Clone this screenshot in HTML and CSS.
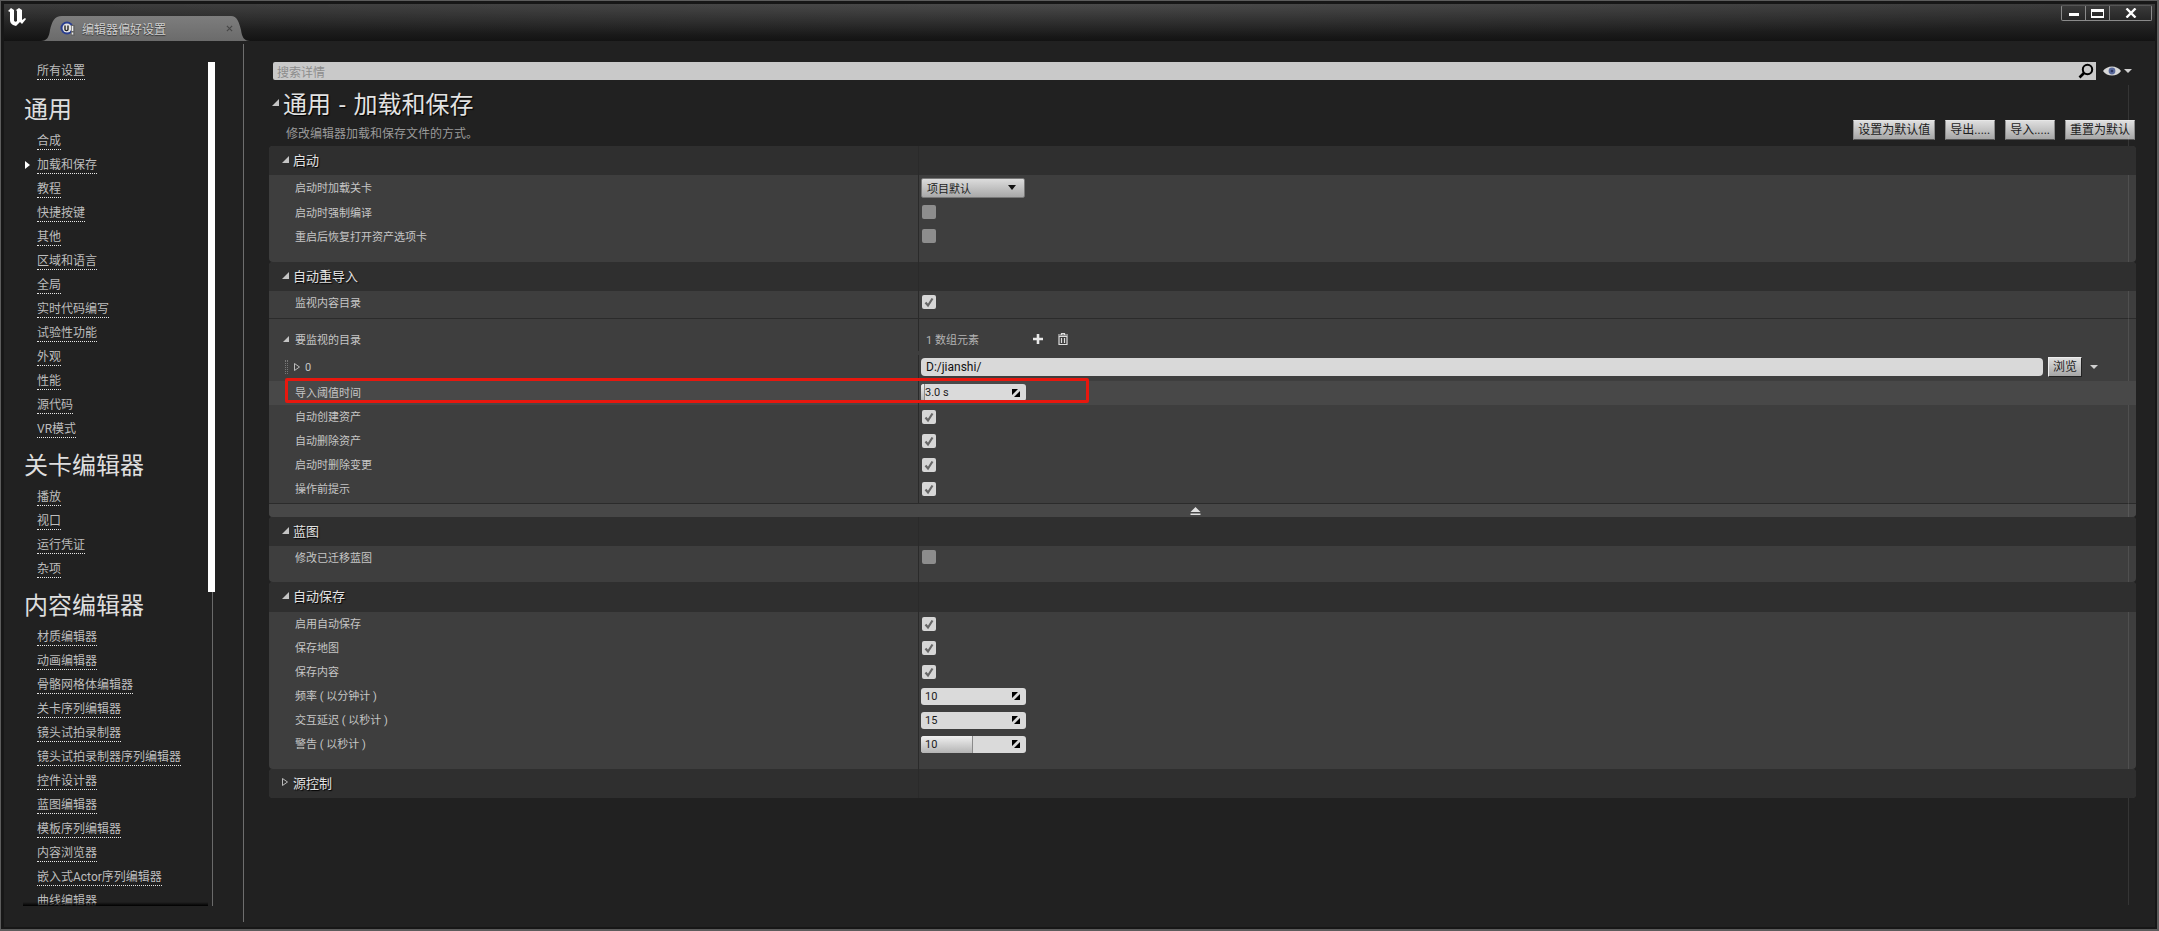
FILE: index.html
```html
<!DOCTYPE html>
<html lang="zh-CN">
<head>
	<meta charset="utf-8">
	<title>编辑器偏好设置</title>
	<link rel="stylesheet" href="styles.css">
</head>
<body>
<div class="window">
	<header class="titlebar">
		<svg class="logo" viewBox="0 0 20 20"><path d="M1 4 L4 1 L7 3 L7 13 C7 15 9 15 10 14 L10 4 L9 3 L12 1 L15 3 L15 13 L18 11 L19 12 L15 17 L13 15 L9 19 L6 18 C4 17 3 15 3 13 L3 5 Z" fill="#fff"/></svg>
		<div class="tab">
			<svg class="tab-icon" viewBox="0 0 16 16">
				<circle cx="7" cy="7" r="6.5" fill="#2b3f8f"/>
				<circle cx="7" cy="7" r="4.5" fill="#e4e4e4"/>
				<path d="M5 4.5 V8.5 C5 10 8 10 8 8.5 V4.5" fill="none" stroke="#222" stroke-width="1.4"/>
				<path d="M11 4 H15 V15 H11 Z" fill="#666"/>
				<path d="M12.5 5 V14" stroke="#eee" stroke-width="1.5" stroke-dasharray="5 1.5 2"/>
			</svg>
			<span class="tab-title">编辑器偏好设置</span>
			<svg class="tab-close" viewBox="0 0 8 8"><path d="M1 1 L7 7 M7 1 L1 7" stroke="#474747" stroke-width="1.3"/></svg>
		</div>
		<div class="win-btns">
			<div class="win-btn"><span class="ic-min"></span></div>
			<div class="win-btn"><span class="ic-max"></span></div>
			<div class="win-btn win-close"><svg viewBox="0 0 12 10"><path d="M1.5 .5 L10.5 9.5 M10.5 .5 L1.5 9.5" stroke="#fff" stroke-width="2.4"/></svg></div>
		</div>
	</header>

	<div class="content">
		<aside class="sidebar">
			<nav class="side-list">
				<div class="side-item"><a>所有设置</a></div>
				<div class="side-head first">通用</div>
				<div class="side-item"><a>合成</a></div>
				<div class="side-item active"><a>加载和保存</a></div>
				<div class="side-item"><a>教程</a></div>
				<div class="side-item"><a>快捷按键</a></div>
				<div class="side-item"><a>其他</a></div>
				<div class="side-item"><a>区域和语言</a></div>
				<div class="side-item"><a>全局</a></div>
				<div class="side-item"><a>实时代码编写</a></div>
				<div class="side-item"><a>试验性功能</a></div>
				<div class="side-item"><a>外观</a></div>
				<div class="side-item"><a>性能</a></div>
				<div class="side-item"><a>源代码</a></div>
				<div class="side-item"><a>VR模式</a></div>
				<div class="side-head">关卡编辑器</div>
				<div class="side-item"><a>播放</a></div>
				<div class="side-item"><a>视口</a></div>
				<div class="side-item"><a>运行凭证</a></div>
				<div class="side-item"><a>杂项</a></div>
				<div class="side-head">内容编辑器</div>
				<div class="side-item"><a>材质编辑器</a></div>
				<div class="side-item"><a>动画编辑器</a></div>
				<div class="side-item"><a>骨骼网格体编辑器</a></div>
				<div class="side-item"><a>关卡序列编辑器</a></div>
				<div class="side-item"><a>镜头试拍录制器</a></div>
				<div class="side-item"><a>镜头试拍录制器序列编辑器</a></div>
				<div class="side-item"><a>控件设计器</a></div>
				<div class="side-item"><a>蓝图编辑器</a></div>
				<div class="side-item"><a>模板序列编辑器</a></div>
				<div class="side-item"><a>内容浏览器</a></div>
				<div class="side-item"><a>嵌入式Actor序列编辑器</a></div>
				<div class="side-item"><a>曲线编辑器</a></div>
			</nav>
			<div class="side-scroll">
				<div class="thumb"></div>
				<div class="track"></div>
			</div>
		</aside>
		<div class="splitter"></div>

		<main class="main">
			<div class="scroll-line"></div>
			<div class="search-row">
				<div class="search">
					<span>搜索详情</span>
					<svg class="search-ic" viewBox="0 0 16 16"><circle cx="9.5" cy="6.5" r="4.7" fill="none" stroke="#000" stroke-width="2"/><path d="M6 10 L1.5 14.5" stroke="#000" stroke-width="2.6"/></svg>
				</div>
				<svg class="eye" viewBox="0 0 18 10"><path d="M0 5 C4 -1 14 -1 18 5 C14 11 4 11 0 5 Z" fill="#d8d8d8"/><circle cx="9" cy="5" r="3.4" fill="#5a6a9c"/><circle cx="9" cy="5" r="1.3" fill="#2c3560"/></svg>
				<span class="caret"></span>
			</div>

			<div class="page-head">
				<div class="page-title">
					<div class="title-line"><span class="tri"></span><h1>通用 - 加载和保存</h1></div>
					<p>修改编辑器加载和保存文件的方式。</p>
				</div>
				<div class="actions">
					<button class="btn">设置为默认值</button>
					<button class="btn">导出.....</button>
					<button class="btn">导入.....</button>
					<button class="btn">重置为默认</button>
				</div>
			</div>

			<div class="panel">
				<section class="sec">
					<div class="row sec-head"><div class="lbl"><span class="tri"></span>启动</div><div class="val"></div></div>
					<div class="row h25"><div class="lbl">启动时加载关卡</div><div class="val"><div class="combo">项目默认<span class="combo-arrow"></span></div></div></div>
					<div class="row"><div class="lbl">启动时强制编译</div><div class="val"><span class="check off"></span></div></div>
					<div class="row"><div class="lbl">重启后恢复打开资产选项卡</div><div class="val"><span class="check off"></span></div></div>
					<div class="row gap g14"><div class="lbl"></div><div class="val"></div></div>
				</section>

				<section class="sec">
					<div class="row sec-head"><div class="lbl"><span class="tri"></span>自动重导入</div><div class="val"></div></div>
					<div class="row h22"><div class="lbl">监视内容目录</div><div class="val"><span class="check"><svg viewBox="0 0 14 14"><path d="M3.5 7.5 L6 10.5 L10.5 3.5" fill="none" stroke="#666" stroke-width="2.2"/></svg></span></div></div>
					<div class="row gap g5"><div class="lbl"></div><div class="val"></div></div>
					<div class="hr"></div>
					<div class="row gap g8"><div class="lbl"></div><div class="val"></div></div>
					<div class="row">
						<div class="lbl sub"><span class="tri small"></span>要监视的目录</div>
						<div class="val array-val">
							<span class="count">1 数组元素</span>
							<svg class="ic-add" viewBox="0 0 10 10"><path d="M5 0 V10 M0 5 H10" stroke="#e8e8e8" stroke-width="2.6"/></svg>
							<svg class="ic-trash" viewBox="0 0 10 12"><path d="M3.5 1.5 V.5 H6.5 V1.5 M0 2 H10 M1 3.5 H9 V11.5 H1 Z" fill="none" stroke="#ddd" stroke-width="1.2"/><path d="M3.5 5 V10 M6.5 5 V10" stroke="#ddd" stroke-width="1.2"/></svg>
						</div>
					</div>
					<div class="row item">
						<div class="lbl sub">
							<span class="grip"></span>
							<svg class="tri-closed" viewBox="0 0 6 8"><path d="M.5 .5 L5.5 4 L.5 7.5 Z" fill="none" stroke="#bbb"/></svg>
							<span>0</span>
						</div>
						<div class="val path-val">
							<div class="input">D:/jianshi/</div>
							<button class="btn browse">浏览</button>
							<span class="caret"></span>
						</div>
					</div>
					<div class="row hi">
						<div class="lbl">导入阈值时间</div>
						<div class="val"><div class="spin"><span class="fill tiny"></span><span class="num">3.0 s</span><svg class="spin-ic" viewBox="0 0 8 8"><path d="M0 0 H6 L0 6 Z M8 8 H2 L8 2 Z" fill="#000"/></svg></div></div>
						<div class="callout"></div>
					</div>
					<div class="row"><div class="lbl">自动创建资产</div><div class="val"><span class="check"><svg viewBox="0 0 14 14"><path d="M3.5 7.5 L6 10.5 L10.5 3.5" fill="none" stroke="#666" stroke-width="2.2"/></svg></span></div></div>
					<div class="row"><div class="lbl">自动删除资产</div><div class="val"><span class="check"><svg viewBox="0 0 14 14"><path d="M3.5 7.5 L6 10.5 L10.5 3.5" fill="none" stroke="#666" stroke-width="2.2"/></svg></span></div></div>
					<div class="row"><div class="lbl">启动时删除变更</div><div class="val"><span class="check"><svg viewBox="0 0 14 14"><path d="M3.5 7.5 L6 10.5 L10.5 3.5" fill="none" stroke="#666" stroke-width="2.2"/></svg></span></div></div>
					<div class="row"><div class="lbl">操作前提示</div><div class="val"><span class="check"><svg viewBox="0 0 14 14"><path d="M3.5 7.5 L6 10.5 L10.5 3.5" fill="none" stroke="#666" stroke-width="2.2"/></svg></span></div></div>
					<div class="row gap g2"><div class="lbl"></div><div class="val"></div></div>
					<div class="hr"></div>
					<div class="adv"><svg viewBox="0 0 11 8"><path d="M5.5 0 L10.5 5 H.5 Z M.5 6.5 H10.5 V8 H.5 Z" fill="#e0e0e0"/></svg></div>
				</section>

				<section class="sec">
					<div class="row sec-head"><div class="lbl"><span class="tri"></span>蓝图</div><div class="val"></div></div>
					<div class="row h22"><div class="lbl">修改已迁移蓝图</div><div class="val"><span class="check off"></span></div></div>
					<div class="row gap g14"><div class="lbl"></div><div class="val"></div></div>
				</section>

				<section class="sec saves">
					<div class="row sec-head tall"><div class="lbl"><span class="tri"></span>自动保存</div><div class="val"></div></div>
					<div class="row"><div class="lbl">启用自动保存</div><div class="val"><span class="check"><svg viewBox="0 0 14 14"><path d="M3.5 7.5 L6 10.5 L10.5 3.5" fill="none" stroke="#666" stroke-width="2.2"/></svg></span></div></div>
					<div class="row"><div class="lbl">保存地图</div><div class="val"><span class="check"><svg viewBox="0 0 14 14"><path d="M3.5 7.5 L6 10.5 L10.5 3.5" fill="none" stroke="#666" stroke-width="2.2"/></svg></span></div></div>
					<div class="row"><div class="lbl">保存内容</div><div class="val"><span class="check"><svg viewBox="0 0 14 14"><path d="M3.5 7.5 L6 10.5 L10.5 3.5" fill="none" stroke="#666" stroke-width="2.2"/></svg></span></div></div>
					<div class="row"><div class="lbl">频率 ( 以分钟计 )</div><div class="val"><div class="spin"><span class="num">10</span><svg class="spin-ic" viewBox="0 0 8 8"><path d="M0 0 H6 L0 6 Z M8 8 H2 L8 2 Z" fill="#000"/></svg></div></div></div>
					<div class="row"><div class="lbl">交互延迟 ( 以秒计 )</div><div class="val"><div class="spin"><span class="num">15</span><svg class="spin-ic" viewBox="0 0 8 8"><path d="M0 0 H6 L0 6 Z M8 8 H2 L8 2 Z" fill="#000"/></svg></div></div></div>
					<div class="row"><div class="lbl">警告 ( 以秒计 )</div><div class="val"><div class="spin"><span class="fill half"></span><span class="num">10</span><svg class="spin-ic" viewBox="0 0 8 8"><path d="M0 0 H6 L0 6 Z M8 8 H2 L8 2 Z" fill="#000"/></svg></div></div></div>
					<div class="row gap g13"><div class="lbl"></div><div class="val"></div></div>
				</section>

				<section class="sec">
					<div class="row sec-head"><div class="lbl"><svg class="tri-closed head" viewBox="0 0 6 8"><path d="M.5 .5 L5.5 4 L.5 7.5 Z" fill="none" stroke="#bbb"/></svg>源控制</div><div class="val"></div></div>
				</section>
			</div>
		</main>
	</div>
</div>
</body>
</html>
```

FILE: styles.css
```css
* {
	box-sizing: border-box;
	margin: 0;
	padding: 0;
}

html, body {
	height: 100%;
	overflow: hidden;
}

body {
	font-family: Roboto, 'Noto Sans CJK SC', sans-serif;
	background: #1a1a1a;
	color: #c8c8c8;
}

.window {
	height: 931px;
	border: solid #5c5c5c;
	border-width: 1px 2px 2px 1px;
	padding: 3px 2px 2px 3px;
	background: #171717;
	display: flex;
	flex-direction: column;
}

/* title bar */

.titlebar {
	height: 37px;
	flex: none;
	display: flex;
	align-items: flex-start;
	background:
		radial-gradient(ellipse 60% 90% at 50% 0, rgba(255,255,255,0.09), rgba(255,255,255,0) 100%),
		linear-gradient(180deg, #383838, #131313);
}

.logo {
	width: 20px;
	height: 20px;
	margin: 3px 0 0 3px;
	flex: none;
}

.tab {
	width: 209px;
	height: 25px;
	margin: 12px 0 0 14px;
	padding: 0 17px 0 19px;
	flex: none;
	display: flex;
	align-items: center;
	background: linear-gradient(180deg, #7d7d7d, #6b6b6b);
	clip-path: path('M0 25 C6 25 8 21 9 14 C11 6 13 0 21 0 L190 0 C196 0 198 6 200 14 C201 21 203 25 209 25 Z');
}

.tab-icon {
	width: 16px;
	height: 16px;
	flex: none;
}

.tab-title {
	margin-left: 6px;
	font-size: 12px;
	color: #cfcfcf;
	text-shadow: 0 1px 1px #333;
	flex: 1;
}

.tab-close {
	width: 7px;
	height: 7px;
}

.win-btns {
	margin: 1px 3px 0 auto;
	display: flex;
	height: 16px;
	border: 1px solid #8a8a8a;
	border-top-color: #555;
	border-radius: 2px;
	background: linear-gradient(180deg, #3a3a3a, #262626);
}

.win-btn {
	width: 24px;
	display: flex;
	align-items: center;
	justify-content: center;
	border-right: 1px solid #8a8a8a;
}

.win-close {
	width: 41px;
	border-right: 0;
}

.win-close svg {
	width: 12px;
	height: 10px;
}

.ic-min {
	width: 10px;
	height: 3px;
	margin-top: 3px;
	background: #fff;
}

.ic-max {
	width: 13px;
	height: 9px;
	border: 1px solid #fff;
	border-top-width: 3px;
	border-bottom-width: 2px;
}

/* sidebar */

.content {
	flex: 1;
	min-height: 0;
	display: flex;
	background: #212121;
}

.sidebar {
	width: 239px;
	flex: none;
	display: flex;
	padding-bottom: 21px;
}

.side-list {
	width: 204px;
	flex: none;
	padding: 18px 0 0 33px;
	overflow: hidden;
	position: relative;
}

.side-list::after {
	content: '';
	position: absolute;
	left: 19px;
	right: 0;
	bottom: 0;
	height: 4px;
	background: linear-gradient(0deg, #000, rgba(0,0,0,0));
}

.side-item {
	height: 24px;
	padding-top: 1px;
	position: relative;
	font-size: 12px;
	line-height: 23px;
	color: #bdbdbd;
}

.side-item a {
	display: inline-block;
	line-height: 15px;
	border-bottom: 1px dotted #e8e8e8;
	white-space: nowrap;
}

.side-item.active::before {
	content: '';
	position: absolute;
	left: -12px;
	top: 8px;
	border-left: 5px solid #fff;
	border-top: 4px solid transparent;
	border-bottom: 4px solid transparent;
}

.side-head {
	height: 38px;
	margin: 6px 0 0 -13px;
	font-size: 24px;
	line-height: 38px;
	color: #dedede;
}

.side-head.first {
	margin-top: 8px;
}

.side-scroll {
	width: 7px;
	margin-top: 21px;
	flex: none;
	display: flex;
	flex-direction: column;
}

.thumb {
	height: 530px;
	background: #fff;
}

.track {
	flex: 1;
	width: 1px;
	margin-left: 4px;
	background: #6a6a6a;
}

.splitter {
	width: 1px;
	margin: 3px 0 5px;
	flex: none;
	background: #6e6e6e;
}

/* main column */

.main {
	flex: 1;
	min-width: 0;
	position: relative;
	padding: 21px 19px 0 25px;
}

.scroll-line {
	position: absolute;
	left: 1884px;
	top: 44px;
	bottom: 22px;
	width: 1px;
	background: rgba(255,255,255,0.09);
}

.search-row {
	height: 18px;
	padding-left: 4px;
	display: flex;
	align-items: center;
}

.search {
	width: 1823px;
	height: 18px;
	padding: 0 2px 0 4px;
	display: flex;
	align-items: center;
	justify-content: space-between;
	background: #c9c9c9;
	border-radius: 2px 0 0 2px;
	font-size: 12px;
	color: #8c8c8c;
}

.search-ic {
	width: 16px;
	height: 16px;
}

.eye {
	width: 18px;
	height: 10px;
	margin-left: 7px;
}

.caret {
	width: 0;
	height: 0;
	margin-left: 3px;
	border-top: 4px solid #d0d0d0;
	border-left: 4px solid transparent;
	border-right: 4px solid transparent;
}

.page-head {
	height: 66px;
	display: flex;
	justify-content: space-between;
	align-items: flex-end;
	padding: 0 1px 6px 3px;
}

.page-title {
	align-self: flex-start;
	padding-top: 6px;
}

.title-line {
	display: flex;
	align-items: center;
	height: 32px;
}

.page-title h1 {
	margin-left: 4px;
	font-size: 24px;
	font-weight: 400;
	word-spacing: 2px;
	color: #e2e2e2;
	text-shadow: 1px 1px 1px #000;
}

.page-title p {
	margin: 8px 0 0 14px;
	font-size: 12px;
	line-height: 16px;
	color: #9a9a9a;
}

.tri {
	width: 0;
	height: 0;
	flex: none;
	border-bottom: 7px solid #c4c4c4;
	border-left: 7px solid transparent;
}

.tri.small {
	border-bottom-width: 6px;
	border-left-width: 6px;
	margin-right: 6px;
	margin-left: -12px;
}

.tri-closed {
	width: 6px;
	height: 8px;
	flex: none;
}

.actions {
	display: flex;
	gap: 10px;
}

.btn {
	height: 20px;
	padding: 0 4px;
	font-family: inherit;
	font-size: 12px;
	line-height: 18px;
	color: #1d1d1d;
	white-space: nowrap;
	background: linear-gradient(180deg, #dedede, #a6a6a6);
	border: 1px solid #8c8c8c;
	border-top-color: #e6e6e6;
	border-bottom-color: #555;
}

/* details panel */

.panel {
	display: flex;
	flex-direction: column;
	font-size: 11px;
}

.sec {
	background: #3e3e3e;
	border-radius: 4px;
	overflow: hidden;
}

.row {
	display: grid;
	grid-template-columns: 649px 1fr;
	height: 24px;
	position: relative;
}

.h25 { height: 25px; }
.h22 { height: 22px; }

.lbl {
	padding-left: 26px;
	display: flex;
	align-items: center;
	color: #c6c6c6;
}

/* these labels sit a pixel above their controls */
.h25 .lbl,
.row.hi .lbl,
.row.hi ~ .row .lbl,
.saves .row .lbl {
	padding-bottom: 2px;
}

.val {
	padding-left: 2px;
	display: flex;
	align-items: center;
	border-left: 1px solid #2a2a2a;
}

.sec-head {
	height: 29px;
	background: #2f2f2f;
}

.sec-head.tall {
	height: 30px;
}

.sec .sec-head .lbl {
	padding-left: 13px;
	padding-bottom: 3px;
	font-size: 13px;
	color: #e2e2e2;
	text-shadow: 1px 1px 1px #000;
}

.sec-head .tri {
	margin-right: 4px;
}

.tri-closed.head {
	margin-right: 5px;
}

.gap.g2 { height: 2px; }
.gap.g5 { height: 5px; }
.gap.g8 { height: 8px; }
.gap.g13 { height: 13px; }
.gap.g14 { height: 14px; }

.hr {
	height: 1px;
	background: #2b2b2b;
}

.row.item {
	height: 30px;
	padding-bottom: 2px;
	padding-top: 4px;
}

.row.hi {
	background: #484848;
}

.row.hi .val {
	padding-bottom: 1px;
}

.callout {
	position: absolute;
	left: 16px;
	top: -3px;
	width: 804px;
	height: 25px;
	border: 3px solid #e8170e;
	border-radius: 2px;
}

.adv {
	height: 13px;
	padding-right: 14px;
	display: flex;
	align-items: center;
	justify-content: center;
	background: #474747;
}

.adv svg {
	width: 11px;
	height: 8px;
}

.check {
	width: 14px;
	height: 14px;
	margin-left: 1px;
	flex: none;
	border-radius: 2px;
	background: #d6d6d6;
}

.check svg {
	display: block;
	width: 14px;
	height: 14px;
}

.check.off {
	background: #8d8d8d;
}

.combo {
	width: 104px;
	height: 20px;
	padding: 0 8px 0 5px;
	display: flex;
	align-items: center;
	justify-content: space-between;
	color: #1d1d1d;
	background: linear-gradient(180deg, #dcdcdc, #a8a8a8);
	border: 1px solid #777;
	border-radius: 2px;
}

.combo-arrow {
	width: 0;
	height: 0;
	border-top: 5px solid #111;
	border-left: 4px solid transparent;
	border-right: 4px solid transparent;
}

.spin {
	width: 105px;
	height: 17px;
	position: relative;
	padding: 0 3px 0 4px;
	display: flex;
	align-items: center;
	justify-content: space-between;
	color: #1a1a1a;
	background: #dadada;
	border-radius: 3px;
	overflow: hidden;
}

.spin .num {
	position: relative;
}

.spin-ic {
	width: 8px;
	height: 8px;
	margin-right: 3px;
	position: relative;
}

.fill {
	position: absolute;
	left: 0;
	top: 0;
	bottom: 0;
	border-right: 1px solid #8a8a8a;
	background: linear-gradient(180deg, #f0f0f0, #b4b4b4);
}

.fill.half { width: 52px; }
.fill.tiny { width: 4px; }

.array-val .count {
	margin-left: 5px;
	width: 107px;
	color: #b4b4b4;
}

.ic-add {
	width: 10px;
	height: 10px;
}

.ic-trash {
	width: 10px;
	height: 12px;
	margin-left: 15px;
}

.sub {
	gap: 0;
}

.grip {
	width: 3px;
	height: 14px;
	margin: 0 6px 0 -10px;
	flex: none;
	border-left: 1px dotted #777;
	border-right: 1px dotted #777;
}

.row.item .lbl span:last-child {
	margin-left: 5px;
}

.path-val {
	gap: 5px;
}

.input {
	width: 1122px;
	height: 18px;
	padding-left: 5px;
	font-size: 12px;
	line-height: 18px;
	color: #111;
	background: #d9d9d9;
	border-radius: 4px;
}

.browse {
	width: 34px;
	padding: 0;
	border-color: #222;
	border-top-color: #eee;
	border-left-color: #eee;
}

.path-val .caret {
	margin-left: 3px;
}
```
